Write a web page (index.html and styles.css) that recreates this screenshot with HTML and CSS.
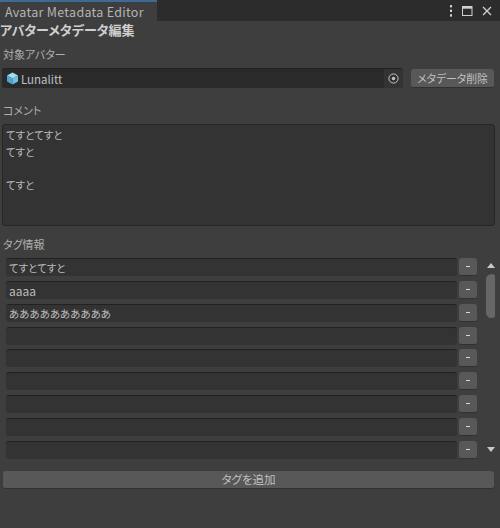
FILE: index.html
```html
<!DOCTYPE html>
<html lang="en">
<head>
    <meta charset="UTF-8">
    <title>Avatar Metadata Editor</title>
    <link rel="stylesheet" href="styles.css">
</head>
<body>
    <div class="tabbar">
        <div class="tab">Avatar Metadata Editor</div>
        <div class="tab-icons">
            <svg width="4" height="12" viewBox="0 0 4 12"><rect x="1" y="0" width="2" height="2.4" fill="#d0d0d0"/><rect x="1" y="4.6" width="2" height="2.4" fill="#d0d0d0"/><rect x="1" y="9.2" width="2" height="2.4" fill="#d0d0d0"/></svg>
            <svg width="11" height="10" viewBox="0 0 11 10"><rect x="0.5" y="0.5" width="9.5" height="9" fill="none" stroke="#d0d0d0"/><rect x="0.5" y="0.5" width="9.5" height="2.2" fill="#d0d0d0"/></svg>
            <svg width="10" height="10" viewBox="0 0 10 10"><path d="M1 1L9 9M9 1L1 9" stroke="#d0d0d0" stroke-width="1.3" fill="none"/></svg>
        </div>
    </div>
    <div class="content">
        <div class="title">アバターメタデータ編集</div>
        <div class="label label-avatar">対象アバター</div>
        <div class="avatar-row">
            <div class="field avatar-field">
                <svg class="cube" width="13" height="13" viewBox="0 0 13 13">
                    <path d="M6.5 0.5L12 3.5L6.5 6.5L1 3.5Z" fill="#a5dcf2"/>
                    <path d="M1 3.5L6.5 6.5V12.5L1 9.5Z" fill="#4aa8d4"/>
                    <path d="M12 3.5L6.5 6.5V12.5L12 9.5Z" fill="#6fc0e4"/>
                </svg>
                <span class="avatar-name">Lunalitt</span>
                <span class="picker">
                    <svg width="11" height="11" viewBox="0 0 11 11"><circle cx="5.5" cy="5.5" r="4.6" fill="none" stroke="#c4c4c4" stroke-width="1"/><circle cx="5.5" cy="5.5" r="1.7" fill="#c4c4c4"/></svg>
                </span>
            </div>
            <div class="btn delete-btn">メタデータ削除</div>
        </div>
        <div class="label label-comment">コメント</div>
        <div class="comment">てすとてすと<br>てすと<br><br>てすと</div>
        <div class="label label-tags">タグ情報</div>
        <div class="tag-area">
            <div class="tag-list">
                <div class="tag-row"><div class="field tag-field">てすとてすと</div><div class="btn minus"><span class="minus-bar"></span></div></div>
                <div class="tag-row"><div class="field tag-field tag-latin">aaaa</div><div class="btn minus"><span class="minus-bar"></span></div></div>
                <div class="tag-row"><div class="field tag-field">ああああああああああ</div><div class="btn minus"><span class="minus-bar"></span></div></div>
                <div class="tag-row"><div class="field tag-field"></div><div class="btn minus"><span class="minus-bar"></span></div></div>
                <div class="tag-row"><div class="field tag-field"></div><div class="btn minus"><span class="minus-bar"></span></div></div>
                <div class="tag-row"><div class="field tag-field"></div><div class="btn minus"><span class="minus-bar"></span></div></div>
                <div class="tag-row"><div class="field tag-field"></div><div class="btn minus"><span class="minus-bar"></span></div></div>
                <div class="tag-row"><div class="field tag-field"></div><div class="btn minus"><span class="minus-bar"></span></div></div>
                <div class="tag-row"><div class="field tag-field"></div><div class="btn minus"><span class="minus-bar"></span></div></div>
            </div>
            <div class="scrollbar">
                <span class="arrow-up"></span>
                <span class="thumb"></span>
                <span class="arrow-down"></span>
            </div>
        </div>
        <div class="btn add-btn">タグを追加</div>
    </div>
</body>
</html>
```

FILE: styles.css
```css
body {
    margin: 0;
    width: 500px;
    height: 528px;
    overflow: hidden;
    background: #3e3e3e;
    color: #c4c4c4;
    font-family: "Noto Sans CJK JP", "Noto Sans", sans-serif;
    font-size: 11.5px;
    font-feature-settings: "palt";
}
.tabbar {
    height: 21px;
    background: #2c2c2c;
    display: flex;
    justify-content: space-between;
}
.tab {
    width: 157px;
    height: 21px;
    box-sizing: border-box;
    background: #3e3e3e;
    border-top: 2px solid #3d6b96;
    padding-left: 5px;
    font-size: 12.5px;
    line-height: 19px;
    letter-spacing: 0.3px;
    color: #b4b4b4;
}
.tab-icons {
    display: flex;
    align-items: center;
    gap: 9px;
    padding-right: 8px;
}
.content {
    padding: 0 5px 0 2px;
}
.title {
    margin-left: -2px;
    height: 20px;
    font-size: 13px;
    font-weight: bold;
    line-height: 18px;
    color: #cfcfcf;
}
.label {
    font-size: 11px;
    line-height: 18px;
    padding-left: 1px;
    color: #b0b0b0;
}
.label-avatar {
    margin-top: 4px;
}
.label-comment {
    margin-top: 13px;
}
.label-tags {
    margin-top: 9px;
}
.avatar-row {
    margin-top: 5px;
    display: flex;
    align-items: center;
    justify-content: space-between;
    height: 20px;
}
.field {
    background: #2a2a2a;
    border-radius: 3px;
    border-top: 1px solid #212121;
    box-sizing: border-box;
}
.avatar-field {
    width: 401px;
    height: 20px;
    display: flex;
    align-items: center;
    padding-left: 4px;
}
.avatar-name {
    margin-left: 2px;
    flex: 1;
    font-size: 11.5px;
    color: #c0c0c0;
}
.picker {
    width: 19px;
    height: 19px;
    background: #333333;
    border-radius: 0 3px 3px 0;
    display: flex;
    align-items: center;
    justify-content: center;
}
.btn {
    background: #585858;
    border-radius: 3px;
    border-bottom: 1px solid #303030;
    box-sizing: border-box;
    color: #c0c0c0;
    text-align: center;
}
.delete-btn {
    width: 83px;
    height: 19px;
    margin-right: 1px;
    font-size: 10.8px;
    line-height: 18px;
}
.comment {
    margin-top: 5px;
    height: 102px;
    width: 493px;
    box-sizing: border-box;
    padding: 2px 3px;
    background: #333333;
    border: 1px solid #262626;
    border-radius: 3px;
    font-size: 10.5px;
    line-height: 16.5px;
    color: #bcbcbc;
}
.tag-area {
    margin-top: 5px;
    height: 201px;
    display: flex;
    overflow: hidden;
}
.tag-list {
    width: 475px;
    padding-left: 4px;
    box-sizing: border-box;
    flex: none;
}
.tag-row {
    display: flex;
    justify-content: space-between;
    height: 18px;
    margin-bottom: 4.85px;
}
.tag-field {
    width: 451px;
    height: 18px;
    background: #333333;
    padding-left: 3px;
    font-size: 10.5px;
    line-height: 18px;
    color: #bcbcbc;
}
.tag-latin {
    font-size: 12px;
}
.minus {
    width: 18px;
    height: 18px;
    display: flex;
    align-items: center;
    justify-content: center;
}
.minus-bar {
    width: 4px;
    height: 1px;
    background: #d8d8d8;
}
.scrollbar {
    margin-left: 9px;
    width: 12px;
    position: relative;
}
.arrow-up {
    position: absolute;
    top: 5px;
    left: 1px;
    border-left: 4px solid transparent;
    border-right: 4px solid transparent;
    border-bottom: 5px solid #c8c8c8;
}
.thumb {
    position: absolute;
    top: 16px;
    left: 0;
    width: 11px;
    height: 44px;
    background: #676767;
    border-radius: 6px;
}
.arrow-down {
    position: absolute;
    top: 189px;
    left: 1px;
    border-left: 4px solid transparent;
    border-right: 4px solid transparent;
    border-top: 5px solid #c8c8c8;
}
.add-btn {
    margin-top: 12px;
    margin-left: 1px;
    width: 491px;
    height: 18px;
    line-height: 17px;
}
```
